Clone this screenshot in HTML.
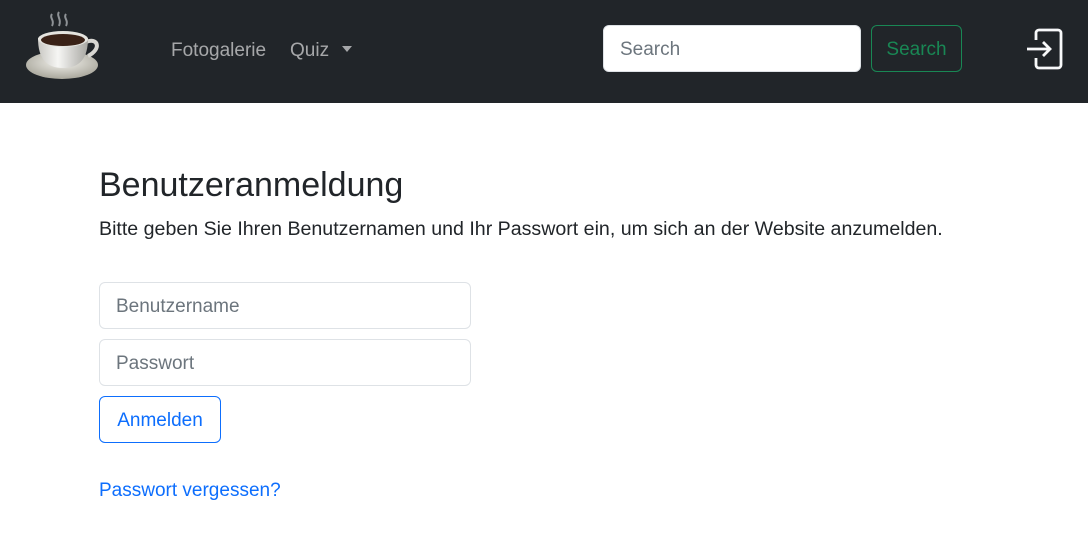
<!DOCTYPE html>
<html><head><meta charset="utf-8"><style>
body{margin:0;width:1088px;height:547px;background:#fff;font-family:"Liberation Sans",sans-serif;color:#212529;overflow:hidden;position:relative}
.nav{position:absolute;left:0;top:0;width:1088px;height:103px;background:#212529}
.a{position:absolute;font-size:19px;color:rgba(255,255,255,.6)}
.in{position:absolute;box-sizing:border-box;border:1px solid #dee2e6;border-radius:6px;font-size:19px;color:#6c757d;padding-left:16px;padding-top:3px;display:flex;align-items:center;background:#fff}
</style></head><body>
<div class="nav">
<svg style="position:absolute;left:24px;top:10px" width="80" height="72" viewBox="0 0 80 72">
<defs><radialGradient id="s" cx=".5" cy=".4" r=".6"><stop offset="0" stop-color="#f4f3ee"/><stop offset="1" stop-color="#a9a79c"/></radialGradient>
<linearGradient id="c" x1="0" x2="1"><stop offset="0" stop-color="#c9c8c3"/><stop offset=".4" stop-color="#f6f6f4"/><stop offset="1" stop-color="#a8a7a2"/></linearGradient></defs>
<path d="M28 4c-3 4 3 6 0 12M35 2c-3 4 3 7 0 14M42 4c-3 4 3 6 0 12" stroke="#8e9296" stroke-width="2" fill="none"/>
<ellipse cx="38" cy="55" rx="36" ry="14" fill="url(#s)"/>
<path d="M62 32c12-5 16 7 2 14" stroke="#d8d7d2" stroke-width="4" fill="none"/>
<path d="M14 28h50c0 20-8 30-25 30S14 48 14 28z" fill="url(#c)"/>
<ellipse cx="39" cy="29" rx="25" ry="8" fill="#e5e4df"/>
<ellipse cx="39" cy="30" rx="22" ry="6" fill="#3a2217"/>
</svg>
<div class="a" style="left:171px;top:40px">Fotogalerie</div>
<div class="a" style="left:290px;top:40px">Quiz</div>
<div style="position:absolute;left:342px;top:46px;border-left:5px solid transparent;border-right:5px solid transparent;border-top:6px solid rgba(255,255,255,.6)"></div>
<div class="in" style="left:603px;top:25px;width:258px;height:47px">Search</div>
<div style="position:absolute;left:871px;top:25px;width:91px;height:47px;box-sizing:border-box;border:1px solid #198754;border-radius:6px;color:#198754;font-size:19px;padding-top:3px;display:flex;align-items:center;justify-content:center">Search</div>
<svg style="position:absolute;left:1025px;top:28px" width="40" height="42" viewBox="0 0 40 42">
<path d="M11 12V5a3 3 0 0 1 3-3h19a3 3 0 0 1 3 3v32a3 3 0 0 1-3 3H14a3 3 0 0 1-3-3v-7" stroke="#f8f9fa" stroke-width="2.8" fill="none"/>
<path d="M2 21h23M18 14l7 7-7 7" stroke="#f8f9fa" stroke-width="2.8" fill="none"/>
</svg>
</div>
<div style="position:absolute;left:99px;top:166px;font-size:34px;font-weight:500">Benutzeranmeldung</div>
<div style="position:absolute;left:99px;top:218px;font-size:19.6px">Bitte geben Sie Ihren Benutzernamen und Ihr Passwort ein, um sich an der Website anzumelden.</div>
<div class="in" style="left:99px;top:282px;width:372px;height:47px">Benutzername</div>
<div class="in" style="left:99px;top:339px;width:372px;height:47px">Passwort</div>
<div style="position:absolute;left:99px;top:396px;width:122px;height:47px;box-sizing:border-box;border:1px solid #0d6efd;border-radius:6px;color:#0d6efd;font-size:19px;padding-top:3px;display:flex;align-items:center;justify-content:center">Anmelden</div>
<div style="position:absolute;left:99px;top:480px;font-size:19px;color:#0d6efd">Passwort vergessen?</div>
</body></html>
